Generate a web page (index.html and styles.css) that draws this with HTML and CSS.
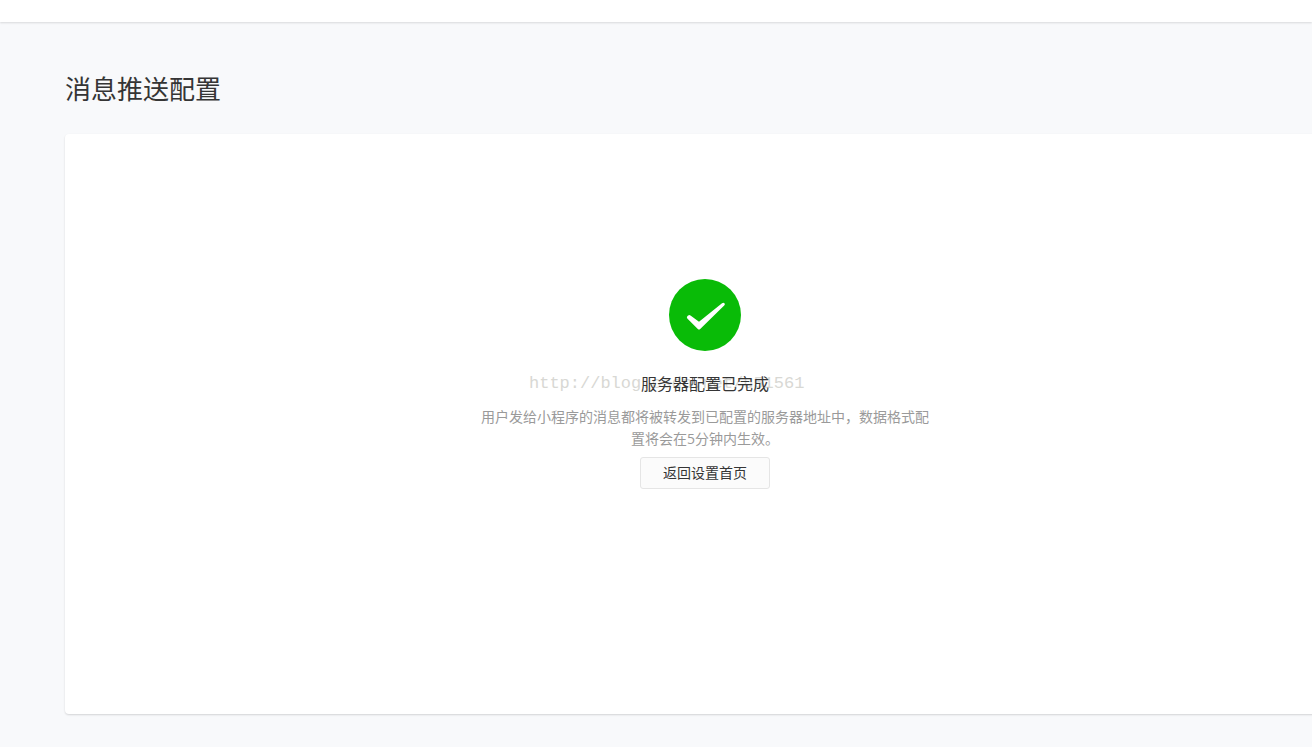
FILE: index.html
```html
<!DOCTYPE html>
<html lang="zh-CN">
	<head>
		<meta charset="utf-8">
		<title>消息推送配置</title>
		<link rel="stylesheet" href="styles.css">
	</head>
	<body>
		<header class="topbar"></header>
		<main class="container">
			<h1>消息推送配置</h1>
			<section class="panel">
				<div class="msg">
					<svg class="msg-icon" viewBox="0 0 72 72" aria-hidden="true">
						<circle cx="36" cy="36" r="36" fill="#09bb07"/>
						<path d="M18.300 39.500Q17.300 38.200 18.500 37L19.200 36.400Q20.300 35.600 21.500 36.500L30 42.700L53 24.300Q54.600 23.200 55.500 24.200Q56.400 25.400 55.200 26.600L31.200 50Q30 51 28.800 50Z" fill="#fff"/>
					</svg>
					<div class="msg-head">
						<span class="watermark">http://blog.csdn.net/u51561</span>
						<h2>服务器配置已完成</h2>
					</div>
					<p>用户发给小程序的消息都将被转发到已配置的服务器地址中，数据格式配置将会在5分钟内生效。</p>
					<button type="button" class="btn">返回设置首页</button>
				</div>
			</section>
		</main>
	</body>
</html>
```

FILE: styles.css
```css
* {
	box-sizing: border-box;
}
body {
	margin: 0;
	overflow-x: hidden;
	background-color: #f8f9fb;
	color: #353535;
	font-family: "Open Sans", "Noto Sans CJK SC", sans-serif;
	font-size: 14px;
}
h1, h2, p {
	margin: 0;
	font-weight: 400;
}
.topbar {
	height: 22px;
	background: #fff;
	box-shadow: 0 1px 2px rgba(0, 0, 0, 0.13);
}
.container {
	min-width: 1280px;
	margin-left: 65px;
	padding: 48px 0 32px;
}
h1 {
	font-size: 26px;
	line-height: 38px;
}
.panel {
	display: flex;
	justify-content: center;
	min-height: 580px;
	margin-top: 26px;
	padding: 145px 0;
	background: #fff;
	border-radius: 4px;
	box-shadow: 0 1px 2px rgba(0, 0, 0, 0.15);
}
.msg {
	display: flex;
	flex-direction: column;
	align-items: center;
	width: 450px;
	text-align: center;
}
.msg-icon {
	width: 72px;
	height: 72px;
}
.msg-head {
	position: relative;
	margin-top: 20px;
}
h2 {
	position: relative;
	font-size: 16px;
	line-height: 26px;
}
.watermark {
	position: absolute;
	top: 0;
	left: -112px;
	color: #d8d8d4;
	font-family: "Liberation Mono", monospace;
	font-size: 17px;
	line-height: 26px;
	white-space: nowrap;
}
p {
	margin-top: 9px;
	color: #9a9a9a;
	line-height: 22px;
}
.btn {
	width: 130px;
	height: 32px;
	margin-top: 7px;
	padding: 0 0 2px;
	background: #fbfbfb;
	border: 1px solid #e5e5e5;
	border-radius: 3px;
	color: #353535;
	font-family: inherit;
	font-size: 14px;
	cursor: pointer;
}
```
